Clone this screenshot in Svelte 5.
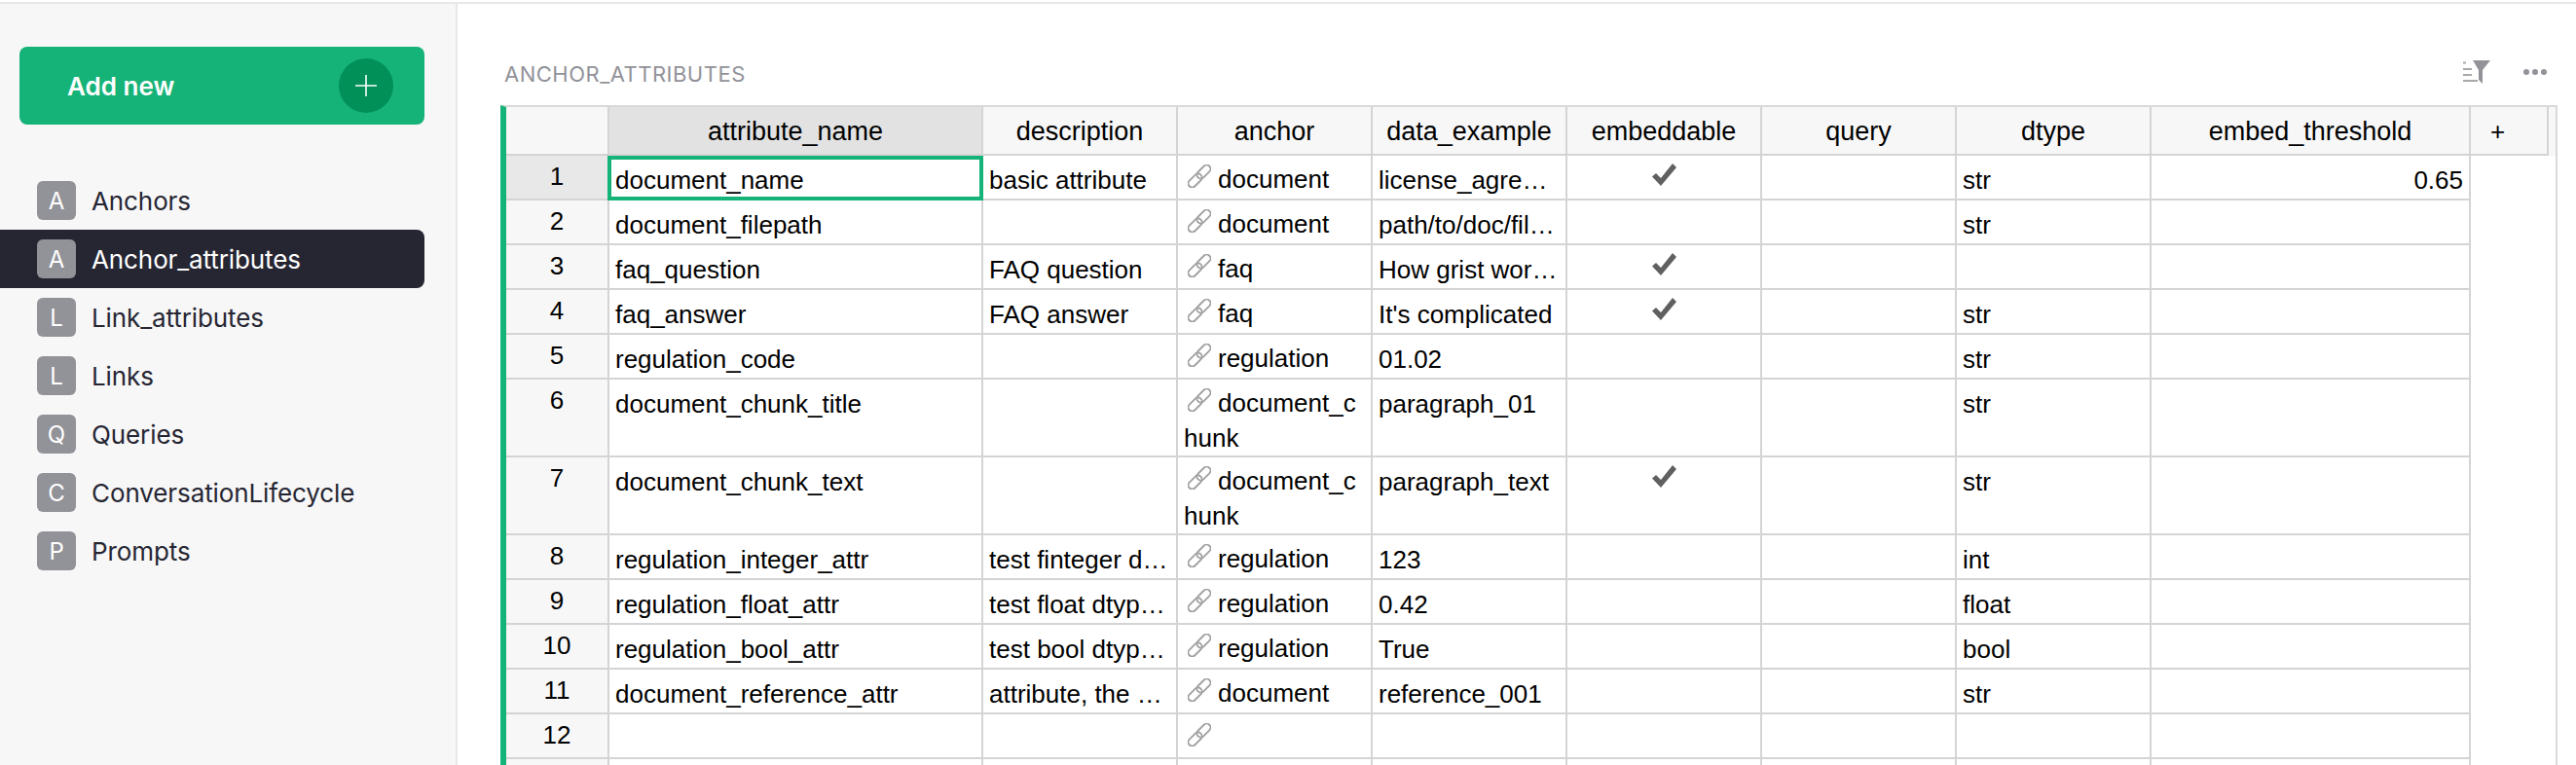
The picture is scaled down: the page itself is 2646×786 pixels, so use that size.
<script>
  const pages = [
    { letter: "A", name: "Anchors" },
    { letter: "A", name: "Anchor_attributes", active: true },
    { letter: "L", name: "Link_attributes" },
    { letter: "L", name: "Links" },
    { letter: "Q", name: "Queries" },
    { letter: "C", name: "ConversationLifecycle" },
    { letter: "P", name: "Prompts" },
  ];

  const columns = [
    { key: "attribute_name", cls: "c-name" },
    { key: "description", cls: "c-std" },
    { key: "anchor", cls: "c-std" },
    { key: "data_example", cls: "c-std" },
    { key: "embeddable", cls: "c-std" },
    { key: "query", cls: "c-std" },
    { key: "dtype", cls: "c-std" },
    { key: "embed_threshold", cls: "c-thr" },
  ];

  const rows = [
    { attribute_name: "document_name", description: "basic attribute", anchor: "document", data_example: "license_agreement", embeddable: true, dtype: "str", embed_threshold: "0.65" },
    { attribute_name: "document_filepath", anchor: "document", data_example: "path/to/doc/file.pdf", dtype: "str" },
    { attribute_name: "faq_question", description: "FAQ question", anchor: "faq", data_example: "How grist works in practice", embeddable: true },
    { attribute_name: "faq_answer", description: "FAQ answer", anchor: "faq", data_example: "It's complicated", embeddable: true, dtype: "str" },
    { attribute_name: "regulation_code", anchor: "regulation", data_example: "01.02", dtype: "str" },
    { attribute_name: "document_chunk_title", anchor: "document_chunk", data_example: "paragraph_01", dtype: "str" },
    { attribute_name: "document_chunk_text", anchor: "document_chunk", data_example: "paragraph_text", embeddable: true, dtype: "str" },
    { attribute_name: "regulation_integer_attr", description: "test finteger dtype", anchor: "regulation", data_example: "123", dtype: "int" },
    { attribute_name: "regulation_float_attr", description: "test float dtype attribute", anchor: "regulation", data_example: "0.42", dtype: "float" },
    { attribute_name: "regulation_bool_attr", description: "test bool dtype attribute", anchor: "regulation", data_example: "True", dtype: "bool" },
    { attribute_name: "document_reference_attr", description: "attribute, the reference", anchor: "document", data_example: "reference_001", dtype: "str" },
    { anchor: "" },
    {},
  ];
</script>

<div class="app">
  <div class="topline"></div>
  <div class="body">
    <aside class="sidebar">
      <button class="add">
        <span>Add new</span>
        <span class="add-circle">
          <svg viewBox="0 0 22 22" width="22" height="22"><path d="M11 0v22M0 11h22" stroke="#fff" stroke-width="1.6" /></svg>
        </span>
      </button>
      <nav class="pages">
        {#each pages as page}
          <div class="page" class:active={page.active}>
            <span class="page-icon">{page.letter}</span>
            <span class="page-name">{page.name}</span>
          </div>
        {/each}
      </nav>
    </aside>

    <main class="main">
      <div class="section-head">
        <span class="section-title">ANCHOR_ATTRIBUTES</span>
        <div class="section-tools">
          <svg viewBox="0 0 30 24" width="30" height="24">
            <path d="M1 2.5h3M1 9h9M1 15h9M1 21h15" stroke="#a8a8ad" stroke-width="2" fill="none" />
            <path d="M11 0H29L21 10V24L17 20V10Z" fill="#929299" />
          </svg>
          <svg viewBox="0 0 24 8" width="24" height="8">
            <circle cx="3" cy="4" r="3" fill="#929299" />
            <circle cx="12" cy="4" r="3" fill="#929299" />
            <circle cx="21" cy="4" r="3" fill="#929299" />
          </svg>
        </div>
      </div>

      <div class="grid">
        <div class="row head">
          <div class="rownum corner"></div>
          {#each columns as col, i}
            <div class="hcell {col.cls}" class:sel={i === 0}>{col.key}</div>
          {/each}
          <div class="hcell c-add">+</div>
        </div>

        {#each rows as row, r}
          <div class="row">
            <div class="rownum" class:sel={r === 0}>{r + 1}</div>
            {#each columns as col, i}
              <div class="cell {col.cls}" class:cursor={r === 0 && i === 0} class:right={col.key === "embed_threshold"} class:wrap={col.key === "anchor"}>
                {#if col.key === "anchor" && row.anchor !== undefined}
                  <svg class="link" viewBox="0 0 24 24" width="24" height="24" fill="none" stroke="#a0a0a0" stroke-width="1.8">
                    <g transform="rotate(45 12 12)">
                      <rect x="8" y="-2.500" width="8" height="16.500" rx="4" />
                      <rect x="8" y="10" width="8" height="16.500" rx="4" />
                    </g>
                  </svg>{row.anchor}
                {:else if col.key === "embeddable"}
                  {#if row.embeddable}
                    <svg class="check" viewBox="0 0 25 23" width="25" height="23"><path d="M0 13.500 4 10 9 15 21 0 25 4 9 23Z" fill="#606060" /></svg>
                  {/if}
                {:else}
                  {row[col.key] ?? ""}
                {/if}
              </div>
            {/each}
          </div>
        {/each}
      </div>
    </main>
  </div>
</div>

<style>
  :global(body) {
    margin: 0;
    background: #fff;
    overflow: hidden;
  }

  .app {
    width: 2646px;
    height: 786px;
    overflow: hidden;
    display: flex;
    flex-direction: column;
    padding-top: 2px;
    box-sizing: border-box;
    font-family: "Inter", "Liberation Sans", sans-serif;
  }

  .topline {
    height: 2px;
    flex: none;
    background: #e8e8e8;
  }

  .body {
    display: flex;
    flex: 1;
    min-height: 0;
  }

  .sidebar {
    width: 468px;
    flex: none;
    background: #f7f7f7;
    border-right: 2px solid #e8e8e8;
    padding-top: 44px;
  }

  .add {
    width: 416px;
    height: 80px;
    margin-left: 20px;
    padding: 0 32px 0 49px;
    display: flex;
    align-items: center;
    justify-content: space-between;
    border: 0;
    border-radius: 8px;
    background: #16b378;
    color: #fff;
    font: 600 26px "Inter", sans-serif;
  }

  .add-circle {
    width: 56px;
    height: 56px;
    border-radius: 50%;
    background: #009058;
    display: flex;
    align-items: center;
    justify-content: center;
  }

  .pages {
    margin-top: 48px;
  }

  .page {
    width: 436px;
    height: 60px;
    display: flex;
    align-items: center;
    padding-left: 38px;
    box-sizing: border-box;
    color: #262633;
    font-size: 26px;
    letter-spacing: -0.1px;
    border-radius: 0 8px 8px 0;
  }

  .page.active {
    background: #262633;
    color: #fff;
  }

  .page-icon {
    width: 40px;
    height: 40px;
    margin-right: 16px;
    border-radius: 6px;
    background: #929299;
    color: #fff;
    display: flex;
    align-items: center;
    justify-content: center;
    font-size: 24px;
  }

  .section-head {
    height: 104px;
    box-sizing: border-box;
    padding: 54px 30px 0 4px;
    display: flex;
    justify-content: space-between;
    align-items: flex-start;
  }

  .section-title {
    color: #929299;
    font-size: 22px;
    letter-spacing: 0.5px;
    line-height: 36px;
  }

  .section-tools {
    display: flex;
    align-items: center;
    gap: 33px;
    margin-top: 4px;
  }

  .main {
    flex: 1;
    min-width: 0;
    padding-left: 44px;
  }

  .grid {
    width: 2113px;
    box-sizing: border-box;
    border-top: 2px solid #d9d9d9;
    border-right: 2px solid #d9d9d9;
    border-left: 6px solid #16b378;
    font: 26px/34px "Liberation Sans", sans-serif;
    color: #000;
  }

  .row {
    display: flex;
  }

  .row.head {
    background: #f7f7f7;
  }

  .rownum {
    width: 106px;
    flex: none;
    box-sizing: border-box;
    padding-top: 4px;
    text-align: center;
    background: #f7f7f7;
    border-right: 2px solid #d4d4d4;
    border-bottom: 2px solid #d4d4d4;
  }

  .rownum.sel {
    background: #e8e8e8;
  }

  .hcell {
    height: 50px;
    flex: none;
    box-sizing: border-box;
    padding-top: 8px;
    font-size: 27px;
    text-align: center;
    border-right: 2px solid #d4d4d4;
    border-bottom: 2px solid #d4d4d4;
  }

  .hcell.sel {
    background: #e2e2e2;
  }

  .c-name { width: 384px; }
  .c-std { width: 200px; }
  .c-thr { width: 328px; }
  .c-add { width: 80px; text-align: left; padding-left: 20px; font-size: 26px; }

  .cell {
    flex: none;
    box-sizing: border-box;
    min-height: 46px;
    padding: 8px 6px 2px;
    border-right: 2px solid #d4d4d4;
    border-bottom: 2px solid #d4d4d4;
    white-space: nowrap;
    overflow: hidden;
    text-overflow: ellipsis;
  }

  .cell.right {
    text-align: right;
  }

  .cell.wrap {
    white-space: normal;
    word-break: break-all;
    line-height: 36px;
    padding-top: 6px;
    padding-bottom: 0;
  }

  .cell.cursor {
    border-color: #16b378;
    box-shadow: -2px 0 0 #16b378, inset 2px 4px 0 #16b378, inset -2px -2px 0 #16b378;
  }

  .link {
    margin: 0 7px 0 4px;
  }

  .check {
    display: block;
    margin: 0 auto;
  }
</style>
